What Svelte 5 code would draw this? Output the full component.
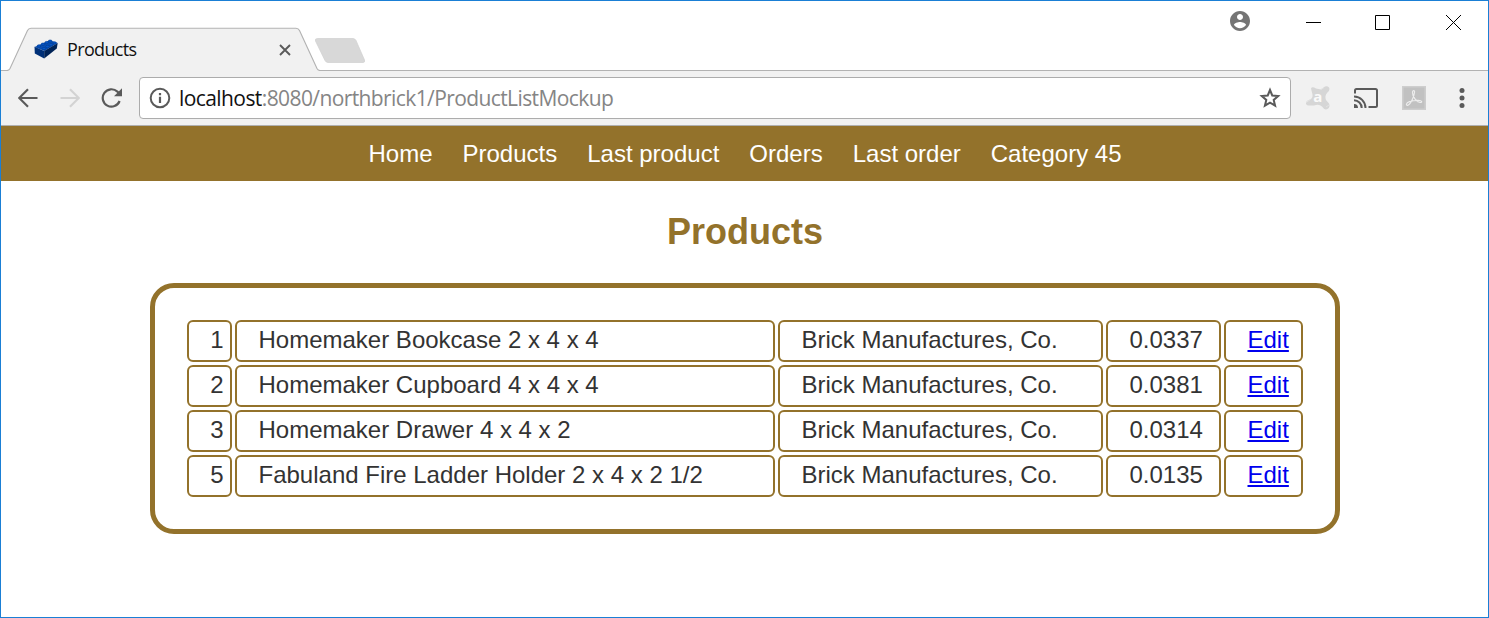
<script>
  const links = ['Home', 'Products', 'Last product', 'Orders', 'Last order', 'Category 45'];
  const products = [
    { id: 1, name: 'Homemaker Bookcase 2 x 4 x 4', maker: 'Brick Manufactures, Co.', weight: '0.0337' },
    { id: 2, name: 'Homemaker Cupboard 4 x 4 x 4', maker: 'Brick Manufactures, Co.', weight: '0.0381' },
    { id: 3, name: 'Homemaker Drawer 4 x 4 x 2', maker: 'Brick Manufactures, Co.', weight: '0.0314' },
    { id: 5, name: 'Fabuland Fire Ladder Holder 2 x 4 x 2 1/2', maker: 'Brick Manufactures, Co.', weight: '0.0135' }
  ];
</script>

<div class="window">
  <header class="tabstrip">
    <svg class="outline" width="370" height="70" viewBox="1 1 370 70">
      <path d="M0 71V70.500H7Q9 70.500 10 68.500L27.500 30.500Q28.500 28.200 31 28.200H296Q298.500 28.200 299.500 30.500L317 68.500Q318 70.500 320 70.500V71Z" fill="#f1f1f1" />
      <path d="M0 70.500H7Q9 70.500 10 68.500L27.500 30.500Q28.500 28.200 31 28.200H296Q298.500 28.200 299.500 30.500L317 68.500Q318 70.500 320 70.500H371" fill="none" stroke="#b2b2b2" stroke-width="1.1" />
      <path d="M317.500 38.500H353Q355 38.500 356 40.500L364.500 60Q365.200 62.500 363 62.500H328Q326 62.500 325 60.500L315.500 41Q314.700 38.500 317.500 38.500Z" fill="#d8d8d8" stroke="#d0d0d0" stroke-width=".7" />
    </svg>
    <div class="tab">
      <svg width="24" height="20" viewBox="0 0 24 20">
        <path d="M.5 8L16 1.300L23.700 4L10.500 12Z" fill="#0b4fb3" />
        <path d="M.5 7.800L10.200 12V19.500L.8 14.500Z" fill="#003078" />
        <path d="M10.200 12L23.700 4L22.800 9.500L10.200 19.500Z" fill="#002357" />
        <g fill="#0756c9" stroke="#003c91" stroke-width=".6">
          <ellipse cx="5" cy="7" rx="1.900" ry="1.200" /><ellipse cx="9" cy="5.200" rx="1.900" ry="1.200" />
          <ellipse cx="12.700" cy="3.600" rx="1.900" ry="1.200" /><ellipse cx="16.200" cy="2.100" rx="1.900" ry="1.100" />
          <ellipse cx="10" cy="9.500" rx="1.900" ry="1.200" /><ellipse cx="13.500" cy="7.500" rx="1.900" ry="1.200" />
          <ellipse cx="17" cy="5.700" rx="1.900" ry="1.200" /><ellipse cx="20.500" cy="3.900" rx="1.900" ry="1.100" />
        </g>
      </svg>
      <span class="title">Products</span>
      <svg class="close" width="12" height="12" viewBox="0 0 12 12"><path d="M1 1L11 11M11 1L1 11" stroke="#5a5a5a" stroke-width="1.900" /></svg>
    </div>
    <div class="controls">
      <svg width="20" height="20" viewBox="2 2 20 20"><path fill="#757575" d="M12 2C6.480 2 2 6.480 2 12s4.480 10 10 10 10-4.480 10-10S17.520 2 12 2zm0 3c1.660 0 3 1.340 3 3s-1.340 3-3 3-3-1.340-3-3 1.340-3 3-3zm0 14.200c-2.500 0-4.710-1.280-6-3.220.030-1.990 4-3.080 6-3.080 1.990 0 5.970 1.090 6 3.080-1.290 1.940-3.500 3.220-6 3.220z" /></svg>
      <svg class="win" width="15" height="15" viewBox="0 0 15 15"><path d="M0 7.500H15" stroke="#000" /></svg>
      <svg class="win" width="15" height="15" viewBox="0 0 15 15"><path d="M.5.5H14.500V14.500H.5Z" stroke="#000" fill="none" /></svg>
      <svg class="win" width="15" height="15" viewBox="0 0 15 15"><path d="M0 0L15 15M15 0L0 15" stroke="#000" /></svg>
    </div>
  </header>

  <div class="toolbar">
    <svg width="20" height="20" viewBox="0 0 20 20"><path d="M19.500 10H2M10 1.200L1.200 10L10 18.800" fill="none" stroke="#5a5a5a" stroke-width="2.200" /></svg>
    <svg class="forward" width="20" height="20" viewBox="0 0 20 20"><path d="M.5 10H18M10 1.200L18.800 10L10 18.800" fill="none" stroke="#d3d3d3" stroke-width="2.200" /></svg>
    <svg class="reload" width="22" height="22" viewBox="0 0 22 22"><path d="M18.600 14A8.700 8.700 0 1 1 16.400 4.600L18.500 6.800" fill="none" stroke="#5a5a5a" stroke-width="2.200" /><path d="M21 1.200V9.200H13Z" fill="#5a5a5a" /></svg>
    <div class="address">
      <svg width="22" height="22" viewBox="0 0 22 22"><circle cx="11" cy="11" r="9.300" fill="none" stroke="#5a5a5a" stroke-width="2" /><path d="M11 9.700V16M11 6V8.200" stroke="#5a5a5a" stroke-width="2.200" /></svg>
      <span class="url"><span class="host">localhost</span><span class="path">:8080/northbrick1/ProductListMockup</span></span>
      <svg class="star" width="22" height="22" viewBox="0 0 22 22"><path d="M11 3L13.250 8.500L19.200 9L14.700 12.900L16.100 18.700L11 15.600L5.900 18.700L7.300 12.900L2.800 9L8.750 8.500Z" fill="none" stroke="#5a5a5a" stroke-width="2" /></svg>
    </div>
    <svg class="avast" width="26" height="26" viewBox="0 0 26 26">
      <path d="M6 3.500Q7 1 11 3.500L16 4.500L20 1.500Q24 .5 24.500 4Q24.500 6 22 8Q19.500 11 21 15L24 18.500Q25.500 22 22.500 24Q19.500 25.500 17 21.500Q14 18.500 9 20.500L3.500 20.500Q.5 20 1 17.500Q1.500 15.500 5 14.500Q8 13 7.500 9.500Z" fill="#d6d6d6" />
      <path d="M1 17.500L5.500 14.500M16 4.500L19 2.500M21 22L24 20" stroke="#e3e3e3" />
      <text x="8.200" y="16.800" font-family="Open Sans, sans-serif" font-size="15" font-weight="700" fill="#fafafa">a</text>
    </svg>
    <svg class="cast" width="24" height="20" viewBox="0 0 24 20"><path d="M1 5.500V2.500Q1 1 2.500 1H21.500Q23 1 23 2.500V17.500Q23 19 21.500 19H14.500M0 12.300A7.700 7.700 0 0 1 7.700 20M0 8.500A11.500 11.500 0 0 1 11.500 20" fill="none" stroke="#5a5a5a" stroke-width="2" /><path d="M0 16A4 4 0 0 1 4 20H0Z" fill="#5a5a5a" /></svg>
    <svg class="pdf" width="24" height="24" viewBox="0 0 24 24"><path d="M0 0H24V24H0Z" fill="#c1c1c1" /><path d="M.8.8H23.200V23.200H.8Z" fill="none" stroke="#cecece" stroke-width="1.500" /><path d="M4.500 18C5 15.500 10.500 14.500 16 14.300C20.500 14.200 20.500 16.700 18 16.500C14 16 10.500 10 10.500 6.500C10.500 4 13 4 12.500 6.500C12 11 8.500 18.500 5.700 19.300Q4.300 19.500 4.500 18Z" fill="none" stroke="#ededed" stroke-width="1.200" /></svg>
    <svg class="menu" width="6" height="22" viewBox="0 0 6 22"><g fill="#5a5a5a"><circle cx="3" cy="3.400" r="2.500" /><circle cx="3" cy="11" r="2.500" /><circle cx="3" cy="18.600" r="2.500" /></g></svg>
  </div>

  <nav>
    {#each links as link}<a href="#top">{link}</a>{/each}
  </nav>

  <main>
    <h1>Products</h1>
    <section class="panel">
      {#each products as product}
        <div class="cell id">{product.id}</div>
        <div class="cell">{product.name}</div>
        <div class="cell">{product.maker}</div>
        <div class="cell">{product.weight}</div>
        <div class="cell"><a href="#edit">Edit</a></div>
      {/each}
    </section>
  </main>
</div>

<style>
  :global(body) { margin: 0; background: #fff; }
  .window { box-sizing: border-box; width: 1489px; height: 618px; overflow: hidden; border: 1px solid #1a7fd5; background: #fff; font-family: "Liberation Sans", Arial, sans-serif; font-size: 24px; }
  svg { display: block; flex: none; }
  .tabstrip { position: relative; box-sizing: border-box; display: flex; justify-content: space-between; height: 70px; border-bottom: 1px solid #b2b2b2; }
  .outline { position: absolute; left: 0; top: 0; }
  .tab { position: relative; display: flex; align-items: center; box-sizing: border-box; width: 290px; height: 42px; margin-top: 28px; padding-left: 33px; }
  .tab > svg:first-child { margin-top: -3px; }
  .title { flex: 1; margin: -2px 0 0 9px; font: 18px/24px "Open Sans", sans-serif; letter-spacing: -.65px; color: #111; }
  .controls { display: flex; align-items: flex-start; padding: 10px 27px 0 0; }
  .win { margin: 4px 0 0 54px; }
  .win:nth-child(2) { margin-left: 56px; }
  .win:last-child { margin-left: 56px; }
  .toolbar { box-sizing: border-box; height: 55px; display: flex; align-items: center; padding-left: 17px; background: #f1f1f1; border-bottom: 1px solid #b0b0b0; }
  .forward { margin-left: 22px; }
  .reload { margin-left: 21px; }
  .address { box-sizing: border-box; display: flex; align-items: center; width: 1152px; height: 42px; margin-left: 16px; padding: 0 9px; border: 1px solid #acacac; border-radius: 4px; background: #fff; }
  .url { flex: 1; margin-left: 8px; font: 21px/28px "Open Sans", sans-serif; white-space: nowrap; }
  .host { color: #111; letter-spacing: -.58px; }
  .path { color: #858585; letter-spacing: -.6px; }
  .avast { margin-left: 14px; }
  .cast { margin-left: 23px; }
  .pdf { margin-left: 24px; }
  .menu { margin-left: 33px; }
  nav { display: flex; justify-content: center; gap: 30px; height: 55px; padding-left: 1px; line-height: 55px; background: #93722b; }
  nav a { color: #fff; text-decoration: none; }
  h1 { margin: 31px 0 31px 1px; font-size: 36px; line-height: 40px; text-align: center; color: #93722b; }
  .panel { box-sizing: border-box; display: grid; grid-template-columns: 45px 540px 325px 115px 79px; grid-auto-rows: 42px; gap: 3px; width: 1190px; height: 251px; margin: 0 auto; padding: 32px; border: 5px solid #93722b; border-radius: 24px; }
  .cell { box-sizing: border-box; padding-left: 22px; border: 2px solid #93722b; border-radius: 6px; line-height: 35px; color: #333; white-space: nowrap; }
  .id { padding: 0 6px 0 0; text-align: right; }
  .cell a { color: #00e; }
</style>
